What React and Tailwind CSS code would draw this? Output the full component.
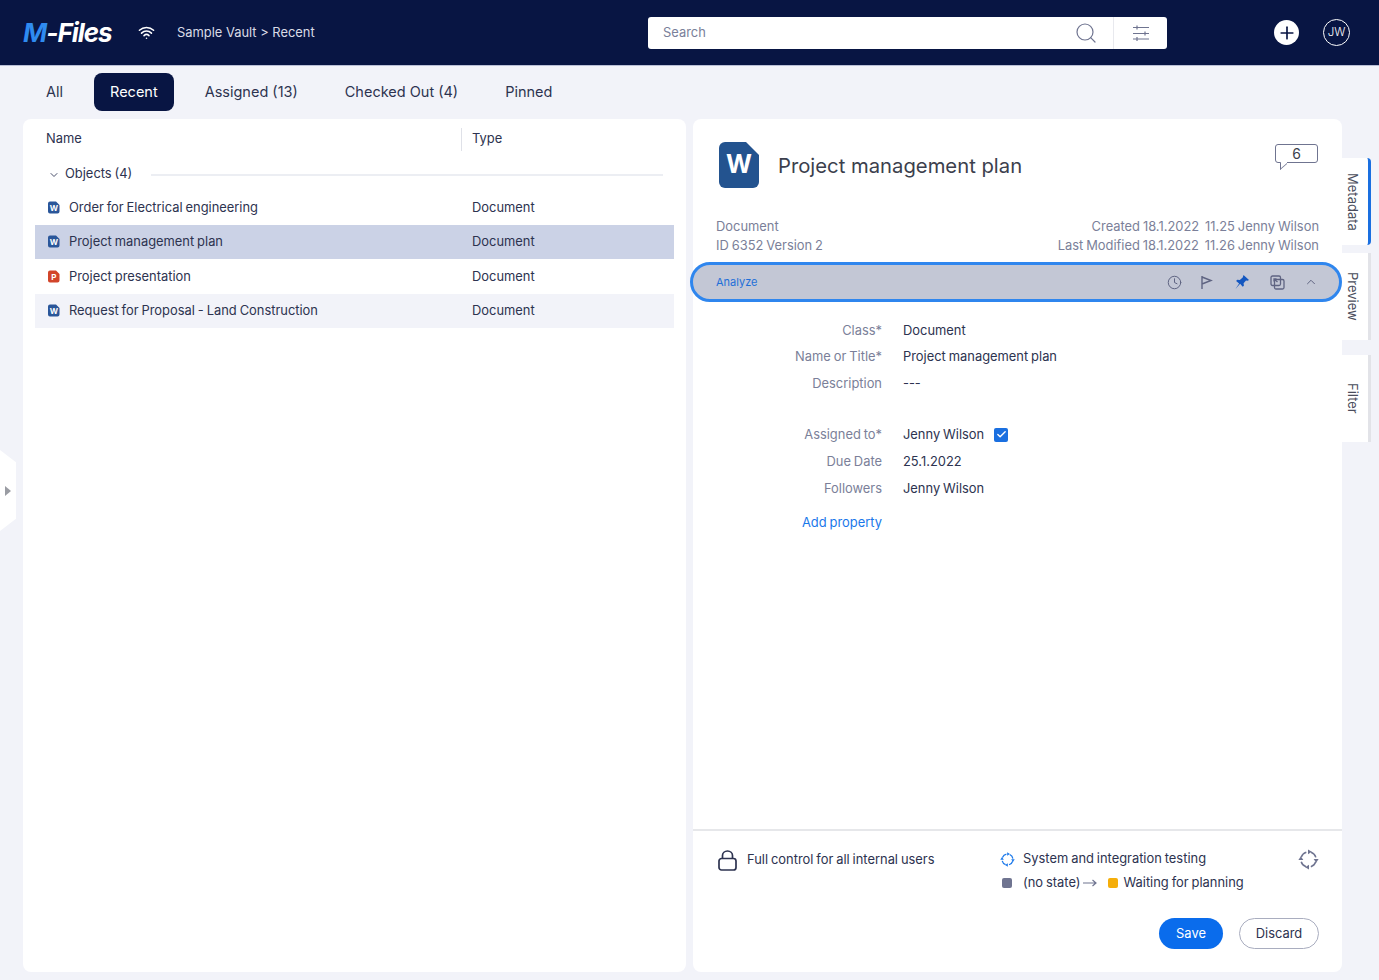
import { ChevronDown, ChevronUp, Clock, Check, Plus, Search, Wifi } from 'lucide-react';

const tabs = ['All', 'Recent', 'Assigned (13)', 'Checked Out (4)', 'Pinned'];

const rows = [
  { name: 'Order for Electrical engineering', kind: 'W', bg: '' },
  { name: 'Project management plan', kind: 'W', bg: 'bg-[#cbd2e6]' },
  { name: 'Project presentation', kind: 'P', bg: '' },
  { name: 'Request for Proposal - Land Construction', kind: 'W', bg: 'bg-[#f2f3f9]' },
];

const props = [
  { label: 'Class*', value: 'Document', cls: 'h-[25px]' },
  { label: 'Name or Title*', value: 'Project management plan', cls: 'h-[27px]' },
  { label: 'Description', value: '---', cls: 'h-[28px] mb-[23px]' },
  { label: 'Assigned to*', value: 'Jenny Wilson', check: true, cls: 'h-[27px]' },
  { label: 'Due Date', value: '25.1.2022', cls: 'h-[27px]' },
  { label: 'Followers', value: 'Jenny Wilson', cls: 'h-[27px]' },
];

function FileBadge({ kind }) {
  const color = kind === 'W' ? '#2a5699' : '#d2452a';
  return (
    <svg width="12" height="13" viewBox="0 0 12 13" className="shrink-0">
      <path d="M2 .5h6l3.5 3.5v6.5a2 2 0 0 1-2 2H2a2 2 0 0 1-2-2v-8a2 2 0 0 1 2-2z" fill={color} />
      <text x="5.8" y="9.6" textAnchor="middle" fontSize="8" fontWeight="700" fill="#fff" fontFamily="Inter, sans-serif">{kind}</text>
    </svg>
  );
}

function CycleIcon({ size, color, strokeWidth }) {
  return (
    <svg width={size} height={size} viewBox="-1 -1 22 22" fill="none" stroke={color} strokeWidth={strokeWidth}>
      <circle cx="10" cy="10" r="8" strokeDasharray="7.5 5.07" transform="rotate(18 10 10)" />
      <path d="M9.5 -.6L13.5 2L9.5 4.6z" fill={color} stroke="none" />
      <path d="M15.4 9.5L18 13.5L20.6 9.5z" fill={color} stroke="none" />
      <path d="M10.5 15.4L6.5 18L10.5 20.6z" fill={color} stroke="none" />
      <path d="M-.6 10.5L2 6.5L4.6 10.5z" fill={color} stroke="none" />
    </svg>
  );
}

function SideTab({ label, active, cls }) {
  return (
    <div className={`w-[29px] h-[87px] bg-white flex items-center justify-center pr-[6px] border-r-[3px] ${active ? 'border-[#1a6fe0] rounded-r-sm' : 'border-[#e2e3e8]'} ${cls}`}>
      <span className="[writing-mode:vertical-rl] text-[13px] text-[#4a4d5c]">{label}</span>
    </div>
  );
}

export default function App() {
  return (
    <div className="relative w-[1379px] h-[980px] overflow-hidden flex flex-col bg-[#f2f3f9] font-['Inter',sans-serif] text-[12.9px] [word-spacing:-0.7px] text-[#2d3350]">
      <header className="h-[66px] shrink-0 bg-[#081543] border-b border-[#b9bfd6] flex items-center">
        <div className="w-[648px] shrink-0 flex items-center pl-[23px]">
          <span className="w-[93px] text-[26px] leading-none font-bold italic tracking-[-1px] text-white">
            <span className="text-[#2f8bf0]">M</span>-Files
          </span>
          <Wifi size={17} strokeWidth={2.2} className="text-white ml-[22px]" />
          <span className="ml-[22px] text-[#d9dbe6] [word-spacing:0px]">Sample Vault &gt; Recent</span>
        </div>
        <div className="w-[519px] h-[32px] mt-[1px] bg-white rounded-[3px] flex items-center">
          <span className="flex-1 pl-[15px] text-[#7a7f9a]">Search</span>
          <Search size={24} strokeWidth={1.2} className="text-[#6f7490] mr-[15px]" />
          <div className="w-[54px] h-full border-l border-[#e8e9ee] flex items-center justify-center">
            <svg width="18" height="16" viewBox="0 0 18 16" fill="none" stroke="#6f7490" strokeWidth="1.2">
              <path d="M1 2.5h16M1 8.5h16M1 14h16" />
              <path d="M5 .5v4M13 6.5v4M5 12v4" />
            </svg>
          </div>
        </div>
        <div className="w-[25px] h-[25px] ml-[107px] rounded-full bg-white flex items-center justify-center">
          <Plus size={20} strokeWidth={2} className="text-[#081543]" />
        </div>
        <div className="w-[27px] h-[27px] ml-[24px] rounded-full border-[1.5px] border-white text-white text-[11.5px] font-light flex items-center justify-center">
          JW
        </div>
      </header>

      <nav className="h-[52px] shrink-0 flex items-center pl-[30px] text-[14.5px] [word-spacing:0px] text-[#2d3350]">
        {tabs.map(tab => (
          <span
            key={tab}
            className={tab === 'Recent'
              ? 'h-[38px] px-[16px] mr-[15px] rounded-[8px] bg-[#081543] text-white flex items-center'
              : 'px-[16px] mr-[15px]'}
          >
            {tab}
          </span>
        ))}
      </nav>

      <main className="flex-1 flex pl-[23px] pt-[1px] pb-[8px]">
        <section className="w-[663px] bg-white rounded-[8px] px-[12px] flex flex-col">
          <div className="h-[38px] pt-[2px] flex items-center">
            <div className="w-[427px] h-[23px] pl-[11px] flex items-center border-r border-[#dfe1e8]">Name</div>
            <span className="pl-[10px]">Type</span>
          </div>
          <div className="h-[33px] flex items-center pl-[13px] pr-[11px]">
            <ChevronDown size={12} className="mr-[5px] mt-[2px] text-[#4a4f6b]" />
            <span>Objects (4)</span>
            <div className="flex-1 h-[2px] bg-[#eceef3] ml-[19px] mt-[2px]" />
          </div>
          {rows.map(row => (
            <div key={row.name} className={`h-[34.5px] flex items-center pl-[13px] ${row.bg}`}>
              <FileBadge kind={row.kind} />
              <span className="w-[412px] pl-[9px]">{row.name}</span>
              <span>Document</span>
            </div>
          ))}
        </section>

        <section className="w-[649px] ml-[7px] bg-white rounded-[8px] flex flex-col">
          <div className="h-[90px] flex items-start pl-[26px] pr-[24px] pt-[23px]">
            <svg width="40" height="46" viewBox="0 0 40 46" className="shrink-0">
              <path d="M6 0h21l13 13v27a6 6 0 0 1-6 6H6a6 6 0 0 1-6-6V6a6 6 0 0 1 6-6z" fill="#23538f" />
              <text x="20" y="31" textAnchor="middle" fontSize="25" fontWeight="700" fill="#fff" fontFamily="Inter, sans-serif">W</text>
            </svg>
            <h1 className="ml-[19px] mt-[9px] text-[20.25px] font-normal [word-spacing:0px] text-[#3c3f4d]">Project management plan</h1>
            <div className="ml-auto mt-[2px] relative w-[43px] h-[19px] rounded-[3px] border-[1.5px] border-[#6f7490] flex items-center justify-center text-[14px] text-[#3c3f4d]">
              6
              <div className="absolute left-[4px] -bottom-[5px] w-[7px] h-[7px] bg-white border-l-[1.5px] border-b-[1.5px] border-[#6f7490] [transform:skewY(-40deg)]" />
            </div>
          </div>

          <div className="h-[53px] px-[23px] pt-[8px] flex justify-between leading-[19px] text-[#7b7f99]">
            <div>
              <div>Document</div>
              <div>ID 6352 Version 2</div>
            </div>
            <div className="text-right">
              <div>Created 18.1.2022&nbsp; 11.25 Jenny Wilson</div>
              <div>Last Modified 18.1.2022&nbsp; 11.26 Jenny Wilson</div>
            </div>
          </div>

          <div className="h-[40px] -ml-[3px] border-[3px] border-[#2f86ee] rounded-full bg-[#c3c7d5] flex items-center pl-[23px] pr-[21px]">
            <span className="text-[11px] pt-[1px] text-[#1f6fd8] flex-1">Analyze</span>
            <Clock size={15} strokeWidth={1.6} className="text-[#5f6482]" />
            <svg width="14" height="15" viewBox="0 0 14 15" fill="none" stroke="#5f6482" strokeWidth="1.4" className="ml-[18.5px]">
              <path d="M2 1v13M2 2l9 3.5L2 9" />
            </svg>
            <svg width="16" height="16" viewBox="0 0 16 16" fill="#1457c0" className="ml-[20px]">
              <path d="M9.5 1l5.5 5-1.4.8-1.6-.4-2.4 2.8.3 2.6-1.2 1-2.6-3L1.5 15l3.6-5.4-3-2.7 1.1-1.1 2.6.2L8.7 3.4z" />
            </svg>
            <svg width="15" height="15" viewBox="0 0 15 15" fill="none" stroke="#5f6482" strokeWidth="1.3" className="ml-[19.5px]">
              <rect x="1" y="1" width="9.5" height="9.5" rx="1.5" />
              <rect x="4.5" y="4.5" width="9.5" height="9.5" rx="1.5" />
              <path d="M7.5 7L4 4M4 6.5V4h2.5" />
            </svg>
            <ChevronUp size={14} strokeWidth={1.7} className="text-[#5f6482] ml-[19.5px]" />
          </div>

          <div className="flex-1 pt-[16px]">
            {props.map(p => (
              <div key={p.label} className={`flex items-center ${p.cls}`}>
                <span className="w-[189px] text-right text-[#7b7f99]">{p.label}</span>
                <span className="ml-[21px]">{p.value}</span>
                {p.check && (
                  <span className="ml-[10px] w-[14px] h-[14px] rounded-[2px] bg-[#1a6fe0] flex items-center justify-center">
                    <Check size={11} strokeWidth={3} className="text-white" />
                  </span>
                )}
              </div>
            ))}
            <div className="w-[189px] mt-[7px] h-[27px] flex items-center justify-end text-[#1a78ea]">Add property</div>
          </div>

          <div className="h-[143px] shrink-0 border-t-2 border-[#e6e7ea] pl-[25px] pr-[23px] flex flex-col">
            <div className="flex mt-[16px]">
              <div className="w-[282px] flex items-center h-[26px]">
                <svg width="19" height="21" viewBox="0 0 19 21" fill="none" stroke="#2d3350" strokeWidth="1.7" className="shrink-0">
                  <rect x="1" y="8.5" width="17" height="11.5" rx="2.5" />
                  <path d="M4.5 8.5V5.5a5 4.5 0 0 1 10 0v3" />
                </svg>
                <span className="ml-[10px]">Full control for all internal users</span>
              </div>
              <div className="flex-1 leading-[24px]">
                <div className="flex items-center h-[24px]">
                  <CycleIcon size={15} color="#1a78ea" strokeWidth={1.8} />
                  <span className="ml-[8px]">System and integration testing</span>
                  <span className="ml-auto">
                    <CycleIcon size={21} color="#6f7490" strokeWidth={1.6} />
                  </span>
                </div>
                <div className="flex items-center h-[24px] pl-[2px]">
                  <span className="w-[10px] h-[10px] rounded-[2px] bg-[#6f7490]" />
                  <span className="ml-[11px]">(no state)</span>
                  <svg width="14" height="10" viewBox="0 0 14 10" fill="none" stroke="#6f7490" strokeWidth="1.2" className="ml-[3px]">
                    <path d="M0 5h13M9.5 2l3.5 3-3.5 3" />
                  </svg>
                  <span className="ml-[11px] w-[10px] h-[10px] rounded-[2px] bg-[#f5ae0a]" />
                  <span className="ml-[5px]">Waiting for planning</span>
                </div>
              </div>
            </div>
            <div className="flex justify-end mt-[23px]">
              <button className="w-[64px] h-[31px] rounded-full bg-[#0a6cec] text-white">Save</button>
              <button className="w-[80px] h-[31px] ml-[16px] rounded-full bg-white border border-[#a9adbf]">Discard</button>
            </div>
          </div>
        </section>

        <aside className="pt-[39px] flex flex-col">
          <SideTab label="Metadata" active />
          <SideTab label="Preview" cls="mt-[8px]" />
          <SideTab label="Filter" cls="mt-[15px]" />
        </aside>
      </main>

      <div className="absolute left-0 top-[450px] w-[16px] h-[81px] bg-white [clip-path:polygon(0_0,100%_15%,100%_85%,0_100%)] flex items-center">
        <span className="ml-[5px] w-0 h-0 border-y-[5px] border-y-transparent border-l-[6px] border-l-[#9a9ca3]" />
      </div>
    </div>
  );
}
